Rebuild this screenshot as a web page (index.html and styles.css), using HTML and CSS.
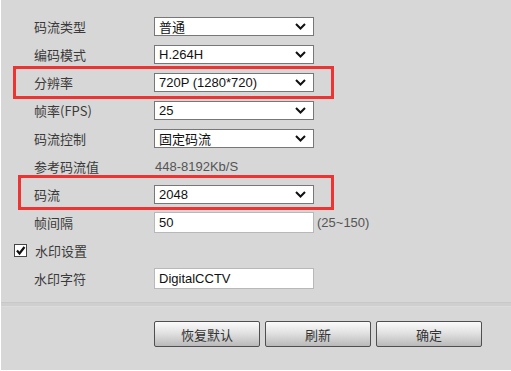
FILE: index.html
```html
<!DOCTYPE html>
<html>
<head>
<meta charset="utf-8">
<link rel="stylesheet" href="styles.css">
</head>
<body>
<div class="page">
  <div class="form">
    <div class="row"><span class="label">码流类型</span><div class="select"><span>普通</span><svg class="chev" width="11" height="7" viewBox="0 0 11 7"><path d="M1 1 L5.5 5.5 L10 1" fill="none" stroke="#111" stroke-width="2"/></svg></div></div>
    <div class="row"><span class="label">编码模式</span><div class="select"><span>H.264H</span><svg class="chev" width="11" height="7" viewBox="0 0 11 7"><path d="M1 1 L5.5 5.5 L10 1" fill="none" stroke="#111" stroke-width="2"/></svg></div></div>
    <div class="row"><span class="label">分辨率</span><div class="select"><span>720P (1280*720)</span><svg class="chev" width="11" height="7" viewBox="0 0 11 7"><path d="M1 1 L5.5 5.5 L10 1" fill="none" stroke="#111" stroke-width="2"/></svg></div></div>
    <div class="row"><span class="label">帧率(FPS)</span><div class="select"><span>25</span><svg class="chev" width="11" height="7" viewBox="0 0 11 7"><path d="M1 1 L5.5 5.5 L10 1" fill="none" stroke="#111" stroke-width="2"/></svg></div></div>
    <div class="row"><span class="label">码流控制</span><div class="select"><span>固定码流</span><svg class="chev" width="11" height="7" viewBox="0 0 11 7"><path d="M1 1 L5.5 5.5 L10 1" fill="none" stroke="#111" stroke-width="2"/></svg></div></div>
    <div class="row"><span class="label">参考码流值</span><span class="ref">448-8192Kb/S</span></div>
    <div class="row"><span class="label">码流</span><div class="select"><span>2048</span><svg class="chev" width="11" height="7" viewBox="0 0 11 7"><path d="M1 1 L5.5 5.5 L10 1" fill="none" stroke="#111" stroke-width="2"/></svg></div></div>
    <div class="row"><span class="label">帧间隔</span><div class="input tall">50</div><span class="hint">(25~150)</span></div>
    <div class="row check-row"><span class="checkbox"><svg width="11" height="11" viewBox="0 0 11 11"><path d="M2 5.5 L4.5 8.5 L9.5 2" fill="none" stroke="#111" stroke-width="2.2"/></svg></span><span class="label">水印设置</span></div>
    <div class="row"><span class="label">水印字符</span><div class="input tall">DigitalCCTV</div></div>
    <div class="mark mark1"></div>
    <div class="mark mark2"></div>
  </div>
  <div class="sep"></div>
  <div class="buttons">
    <button class="btn">恢复默认</button>
    <button class="btn">刷新</button>
    <button class="btn">确定</button>
  </div>
</div>
</body>
</html>
```
FILE: styles.css
```css
html, body {
  margin: 0;
  padding: 0;
  background: #ffffff;
}
.page {
  margin-left: 1px;
  width: 510px;
  height: 370px;
  background: #d7d7d7;
  font-family: "Liberation Sans", "Noto Sans CJK SC", sans-serif;
  font-size: 13px;
  overflow: hidden;
}
.form {
  position: relative;
  padding-top: 12px;
}
.row {
  display: flex;
  align-items: center;
  height: 28px;
  padding-left: 33px;
}
.label {
  width: 120px;
  color: #3a3a3a;
  font-family: "Noto Sans CJK SC", sans-serif;
  font-size: 13px;
}
.select {
  box-sizing: border-box;
  width: 160px;
  height: 19px;
  border: 1px solid #777;
  background: #fff;
  display: flex;
  align-items: center;
  justify-content: space-between;
  padding: 0 7px 0 4px;
  color: #111;
  font-family: "Liberation Sans", "Noto Sans CJK SC", sans-serif;
}
.chev { display: block; }
.ref {
  color: #555;
  padding-left: 1px;
}
.input {
  box-sizing: border-box;
  width: 160px;
  background: #fff;
  border: 1px solid #b8b8b8;
  padding-left: 4px;
  display: flex;
  align-items: center;
  color: #111;
}
.tall { height: 21px; }
.hint {
  color: #555;
  margin-left: 3px;
}
.check-row { padding-left: 13px; }
.checkbox {
  box-sizing: border-box;
  width: 13px;
  height: 13px;
  border: 1px solid #444;
  background: #fff;
  display: flex;
  align-items: center;
  justify-content: center;
  margin-right: 8px;
}
.checkbox svg { display: block; }
.check-row .label { width: auto; }
.mark {
  position: absolute;
  border: 3px solid #ee3333;
  box-sizing: border-box;
}
.mark1 { left: 12px; top: 66px; width: 321px; height: 33px; }
.mark2 { left: 17px; top: 175px; width: 316px; height: 35px; }
.sep {
  margin-top: 10px;
  height: 3px;
  border-top: 1px solid #c8c8c8;
  background: #cfcfcf;
  border-bottom: 1px solid #dcdcdc;
}
.buttons {
  display: flex;
  gap: 5px;
  padding-left: 153px;
  margin-top: 14px;
}
.btn {
  box-sizing: border-box;
  width: 106px;
  height: 26px;
  border: 1px solid #4f4f4f;
  border-radius: 2px;
  background: linear-gradient(#fbfbfb, #e2e2e2 45%, #b9b9b9);
  font-family: "Noto Sans CJK SC", sans-serif;
  font-size: 13px;
  color: #333;
  padding: 0;
}
```
